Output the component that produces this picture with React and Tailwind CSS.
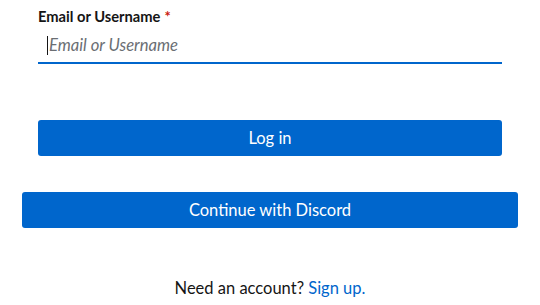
export default function App() {
  return (
    <div className="w-[540px] h-[305px] bg-white px-[22px] text-[#151515]" style={{ fontFamily: 'Lato, "Noto Sans", sans-serif' }}>
      <div className="px-4 pt-[6px]">
        <label className="flex items-center text-[14.7px] font-bold leading-[20px]">
          Email or Username<span className="ml-1 text-[#c9190b]">*</span>
        </label>
        <div className="mt-[2px] h-[36px] border-b-2 border-[#0066cc] flex items-center pl-[9px]">
          <span className="w-px h-[19px] bg-[#151515]"></span>
          <span className="italic text-[16.6px] text-[#6a6e73] ml-[1px]">Email or Username</span>
        </div>
        <button className="mt-[56px] w-full h-[36px] rounded-[3px] bg-[#0066cc] text-white text-[16.5px] flex items-center justify-center">
          Log in
        </button>
      </div>
      <button className="mt-[36px] w-full h-[36px] rounded-[3px] bg-[#0066cc] text-white text-[16.5px] flex items-center justify-center">
        Continue with Discord
      </button>
      <p className="mt-[48px] text-center text-[16.5px] leading-[24px]">
        Need an account? <span className="text-[#0066cc]">Sign up.</span>
      </p>
    </div>
  );
}
